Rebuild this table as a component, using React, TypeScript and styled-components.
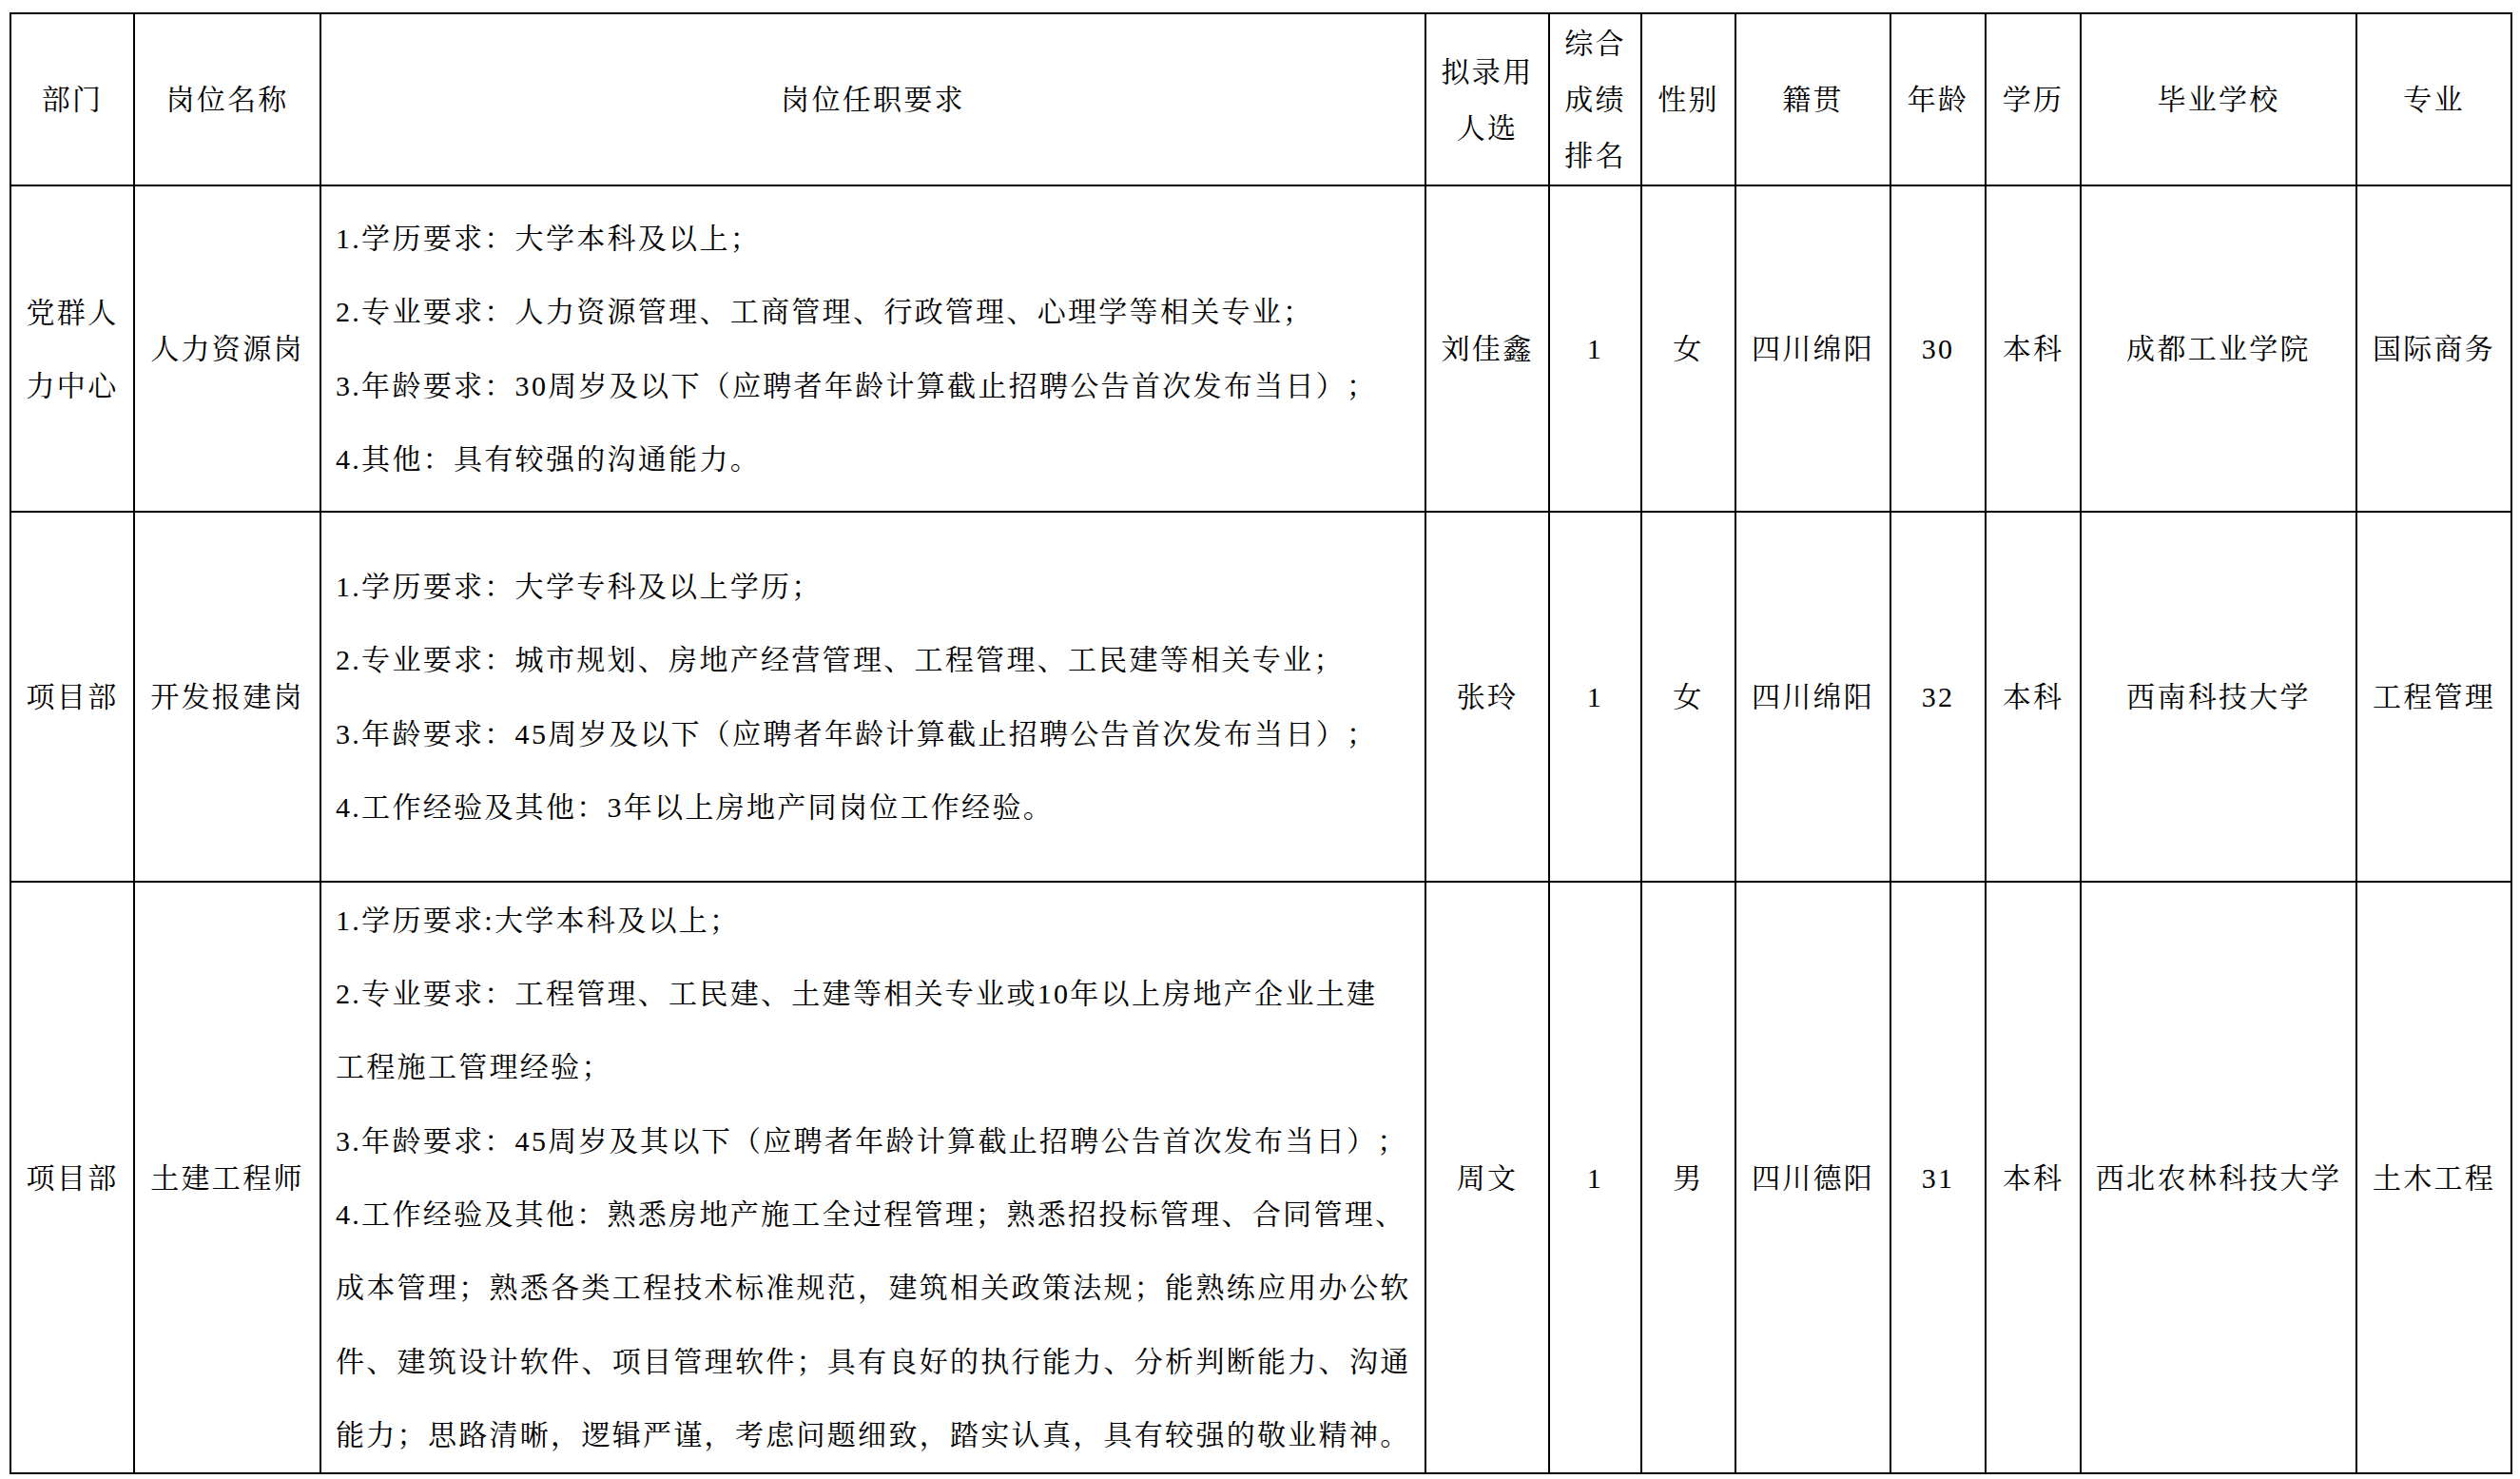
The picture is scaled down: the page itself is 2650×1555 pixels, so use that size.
import React from "react";
import styled, { createGlobalStyle } from "styled-components";

const GlobalStyle = createGlobalStyle`
  html, body {
    margin: 0;
    padding: 0;
    background: #ffffff;
  }
  body {
    padding: 13px 0 0 10px;
  }
`;

const Table = styled.table`
  width: 2632px;
  border-collapse: collapse;
  table-layout: fixed;
  color: #000;
  font-family: "Liberation Serif", "Noto Serif CJK SC", "Noto Sans CJK SC", serif;
  font-size: 30px;
  letter-spacing: 2.3px;
  text-spacing-trim: space-all;
`;

const Col = styled.col<{ $w: number }>`
  width: ${(p) => p.$w}px;
`;

const Row = styled.tr<{ $h: number }>`
  height: ${(p) => p.$h}px;
`;

const HeadCell = styled.th`
  border: 2px solid #000;
  padding: 0 4px;
  font-weight: normal;
  text-align: center;
  vertical-align: middle;
  line-height: 59px;
`;

const Cell = styled.td`
  border: 2px solid #000;
  padding: 0 4px;
  text-align: center;
  vertical-align: middle;
  line-height: 77px;
  white-space: nowrap;
`;

const DescCell = styled(Cell)`
  text-align: left;
  padding: 0 0 0 15px;
`;

const Line = styled.div`
  white-space: nowrap;
  height: 77.3px;
  line-height: 77.3px;
`;

const widths = [130, 196, 1162, 130, 97, 99, 163, 100, 100, 290, 163];

type Person = {
  dept: React.ReactNode;
  post: string;
  lines: string[];
  name: string;
  rank: string;
  sex: string;
  origin: string;
  age: string;
  edu: string;
  school: string;
  major: string;
  h: number;
};

const people: Person[] = [
  {
    dept: (
      <>
        党群人
        <br />
        力中心
      </>
    ),
    post: "人力资源岗",
    lines: [
      "1.学历要求：大学本科及以上；",
      "2.专业要求：人力资源管理、工商管理、行政管理、心理学等相关专业；",
      "3.年龄要求：30周岁及以下（应聘者年龄计算截止招聘公告首次发布当日）；",
      "4.其他：具有较强的沟通能力。",
    ],
    name: "刘佳鑫",
    rank: "1",
    sex: "女",
    origin: "四川绵阳",
    age: "30",
    edu: "本科",
    school: "成都工业学院",
    major: "国际商务",
    h: 343,
  },
  {
    dept: "项目部",
    post: "开发报建岗",
    lines: [
      "1.学历要求：大学专科及以上学历；",
      "2.专业要求：城市规划、房地产经营管理、工程管理、工民建等相关专业；",
      "3.年龄要求：45周岁及以下（应聘者年龄计算截止招聘公告首次发布当日）；",
      "4.工作经验及其他：3年以上房地产同岗位工作经验。",
    ],
    name: "张玲",
    rank: "1",
    sex: "女",
    origin: "四川绵阳",
    age: "32",
    edu: "本科",
    school: "西南科技大学",
    major: "工程管理",
    h: 389,
  },
  {
    dept: "项目部",
    post: "土建工程师",
    lines: [
      "1.学历要求:大学本科及以上；",
      "2.专业要求：工程管理、工民建、土建等相关专业或10年以上房地产企业土建",
      "工程施工管理经验；",
      "3.年龄要求：45周岁及其以下（应聘者年龄计算截止招聘公告首次发布当日）；",
      "4.工作经验及其他：熟悉房地产施工全过程管理；熟悉招投标管理、合同管理、",
      "成本管理；熟悉各类工程技术标准规范，建筑相关政策法规；能熟练应用办公软",
      "件、建筑设计软件、项目管理软件；具有良好的执行能力、分析判断能力、沟通",
      "能力；思路清晰，逻辑严谨，考虑问题细致，踏实认真，具有较强的敬业精神。",
    ],
    name: "周文",
    rank: "1",
    sex: "男",
    origin: "四川德阳",
    age: "31",
    edu: "本科",
    school: "西北农林科技大学",
    major: "土木工程",
    h: 622,
  },
];

export default function App() {
  return (
    <>
      <GlobalStyle />
      <Table>
        <colgroup>
          {widths.map((w, i) => (
            <Col key={i} $w={w} />
          ))}
        </colgroup>
        <thead>
          <Row $h={181}>
            <HeadCell>部门</HeadCell>
            <HeadCell>岗位名称</HeadCell>
            <HeadCell>岗位任职要求</HeadCell>
            <HeadCell>
              拟录用
              <br />
              人选
            </HeadCell>
            <HeadCell>
              综合
              <br />
              成绩
              <br />
              排名
            </HeadCell>
            <HeadCell>性别</HeadCell>
            <HeadCell>籍贯</HeadCell>
            <HeadCell>年龄</HeadCell>
            <HeadCell>学历</HeadCell>
            <HeadCell>毕业学校</HeadCell>
            <HeadCell>专业</HeadCell>
          </Row>
        </thead>
        <tbody>
          {people.map((p, i) => (
            <Row key={i} $h={p.h}>
              <Cell>{p.dept}</Cell>
              <Cell>{p.post}</Cell>
              <DescCell>
                {p.lines.map((l, j) => (
                  <Line key={j}>{l}</Line>
                ))}
              </DescCell>
              <Cell>{p.name}</Cell>
              <Cell>{p.rank}</Cell>
              <Cell>{p.sex}</Cell>
              <Cell>{p.origin}</Cell>
              <Cell>{p.age}</Cell>
              <Cell>{p.edu}</Cell>
              <Cell>{p.school}</Cell>
              <Cell>{p.major}</Cell>
            </Row>
          ))}
        </tbody>
      </Table>
    </>
  );
}
